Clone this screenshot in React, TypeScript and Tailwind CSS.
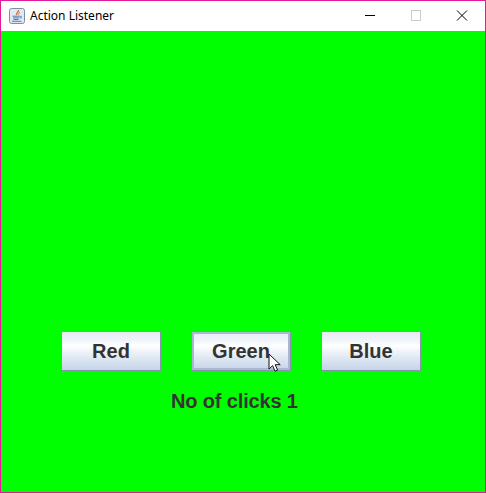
const frameButton =
  "w-[100px] h-10 border border-[#8a93ad] bg-[linear-gradient(180deg,#e6ebf5_0%,#f0f3f9_22%,#ffffff_36%,#e4ecf5_62%,#c5d5e8_100%)] font-['Liberation_Sans',Arial,sans-serif] text-[20px] font-bold text-[#333333] flex items-center justify-center";

function JavaIcon() {
  return (
    <svg width="16" height="16" viewBox="0 0 16 16" className="shrink-0">
      <rect x="0.5" y="0.5" width="15" height="15" rx="2" fill="#e3e9f2" stroke="#7c8ea3" />
      <path d="M9.5 2c.8 1.6-3 2.6-1.6 5" fill="none" stroke="#e0672a" strokeWidth="1.3" />
      <path d="M11 4c-1 .8-1.6 1.4-1 2.6" fill="none" stroke="#e0672a" strokeWidth="1" />
      <path d="M3.5 8.2h7M4 9.9h6M4.5 11.5h5" stroke="#4f7fae" strokeWidth="1" />
      <path d="M3 13.3h9.5" stroke="#4f7fae" strokeWidth="1" />
      <path d="M10.5 8.4h1.8v1.6h-2" fill="none" stroke="#4f7fae" strokeWidth="0.8" />
    </svg>
  );
}

function Cursor() {
  return (
    <svg width="13" height="20" viewBox="0 0 13 20" className="absolute left-[267px] top-[352px]">
      <path
        d="M1 1v15l3.6-3.4 2.4 5.6 2.6-1.1-2.4-5.4h5z"
        fill="#ffffff"
        stroke="#111111"
        strokeWidth="1"
      />
    </svg>
  );
}

export default function App() {
  return (
    <div className="relative w-[486px] h-[493px] flex flex-col border border-[#e3189a] bg-white">
      <div className="h-[30px] flex items-center bg-white shrink-0">
        <div className="ml-[8px]">
          <JavaIcon />
        </div>
        <span className="ml-[5px] font-['Noto_Sans',sans-serif] text-[12px] text-black">Action Listener</span>
        <div className="ml-auto flex items-center">
          <svg width="46" height="30" viewBox="0 0 46 30">
            <path d="M18 14.5h10" stroke="#000000" strokeWidth="1" />
          </svg>
          <svg width="46" height="30" viewBox="0 0 46 30">
            <rect x="18.5" y="9.5" width="9" height="10" fill="none" stroke="#cccccc" strokeWidth="1" />
          </svg>
          <svg width="46" height="30" viewBox="0 0 46 30">
            <path d="M18 9.5l10 10M28 9.5l-10 10" stroke="#000000" strokeWidth="1" />
          </svg>
        </div>
      </div>
      <div className="flex-1 bg-[#00ff00] flex flex-col">
        <div className="mt-[300px] pl-[60px] flex gap-[30px]">
          <div className={frameButton}>Red</div>
          <div className={frameButton + " shadow-[inset_0_0_0_2px_#a9b8d0]"}>Green</div>
          <div className={frameButton}>Blue</div>
        </div>
        <div className="mt-[18px] pl-[170px] font-['Liberation_Sans',Arial,sans-serif] text-[20px] leading-[24px] font-bold tracking-[-0.15px] text-[#333333]">
          No of clicks 1
        </div>
      </div>
      <Cursor />
    </div>
  );
}
